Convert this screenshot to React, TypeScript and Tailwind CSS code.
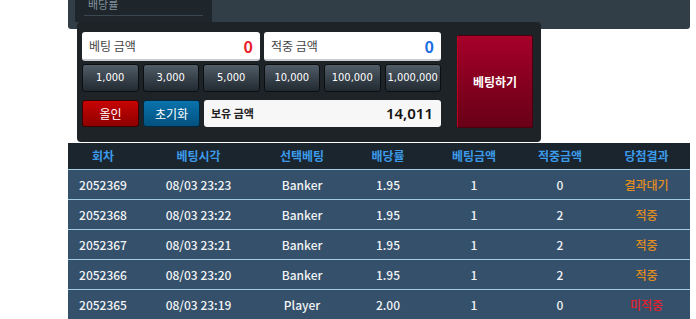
import React from "react";

const chips = ["1,000", "3,000", "5,000", "10,000", "100,000", "1,000,000"];

const rows = [
  { no: "2052369", time: "08/03 23:23", pick: "Banker", odds: "1.95", bet: "1", win: "0", result: "결과대기", color: "text-[#e38d1f]" },
  { no: "2052368", time: "08/03 23:22", pick: "Banker", odds: "1.95", bet: "1", win: "2", result: "적중", color: "text-[#e38d1f]" },
  { no: "2052367", time: "08/03 23:21", pick: "Banker", odds: "1.95", bet: "1", win: "2", result: "적중", color: "text-[#e38d1f]" },
  { no: "2052366", time: "08/03 23:20", pick: "Banker", odds: "1.95", bet: "1", win: "2", result: "적중", color: "text-[#e38d1f]" },
  { no: "2052365", time: "08/03 23:19", pick: "Player", odds: "2.00", bet: "1", win: "0", result: "미적중", color: "text-[#e5202e]" },
];

const headers = ["회차", "베팅시각", "선택베팅", "배당률", "베팅금액", "적중금액", "당첨결과"];

const grid = "grid grid-cols-[70px_121px_86px_86px_86px_86px_87px]";

export default function App() {
  return (
    <div className="w-[696px] h-[319px] bg-white overflow-hidden font-['Noto_Sans_CJK_KR','Noto_Sans',sans-serif]">
      {/* top bar */}
      <div className="ml-[68px] w-[622px] h-[29px] bg-[#313d47] rounded-b-[3px] pl-[7px]">
        <div className="w-[137px] h-[22px] bg-[#1f262b] px-[9px]">
          <div className="h-[16px] border-b border-[#3b4751] overflow-hidden">
            <div className="-mt-[3px] pl-[4px] text-[11px] leading-[14px] text-[#7f909c]">배당률</div>
          </div>
        </div>
      </div>

      {/* betting panel */}
      <div className="relative -mt-[7px] ml-[77px] w-[464px] h-[120px] bg-[#1d2327] rounded-[4px] pl-[5px] pr-[8px] pt-[10px] flex gap-[16px]">
        <div className="w-[359px] flex flex-col">
          <div className="flex gap-[4px]">
            <div className="w-[178px] h-[29px] bg-white rounded-[3px] border-b-2 border-[#c9ccd3] flex items-center justify-between px-[7px]">
              <span className="text-[12px] text-[#444]">베팅 금액</span>
              <span className="text-[16px] font-bold text-[#e8232b] leading-none">0</span>
            </div>
            <div className="w-[177px] h-[29px] bg-white rounded-[3px] border-b-2 border-[#c9ccd3] flex items-center justify-between px-[7px]">
              <span className="text-[12px] text-[#444]">적중 금액</span>
              <span className="text-[16px] font-bold text-[#1b6fe0] leading-none">0</span>
            </div>
          </div>
          <div className="mt-[3px] flex gap-[4px]">
            {chips.map((c) => (
              <button
                key={c}
                className="flex-1 h-[28px] rounded-[3px] border border-[#0c0f12] bg-gradient-to-b from-[#515d68] to-[#222a31] text-white text-[11px] font-['DejaVu_Sans_Condensed','Liberation_Sans',sans-serif] flex items-center justify-center"
              >
                {c}
              </button>
            ))}
          </div>
          <div className="mt-[8px] flex gap-[4px]">
            <button className="w-[57px] h-[27px] rounded-[3px] border border-[#3a0000] bg-gradient-to-b from-[#c80404] to-[#8e0000] text-white text-[12px]">
              올인
            </button>
            <button className="w-[57px] h-[27px] rounded-[3px] border border-[#03273d] bg-gradient-to-b from-[#0a73ad] to-[#03517f] text-white text-[12px]">
              초기화
            </button>
            <div className="flex-1 h-[27px] rounded-[3px] bg-[#f7f7f7] flex items-center justify-between pl-[7px] pr-[8px]">
              <span className="text-[11px] font-bold text-[#222]">보유 금액</span>
              <span className="text-[15px] font-semibold text-[#111] font-['Noto_Sans',sans-serif]">14,011</span>
            </div>
          </div>
        </div>
        <button className="mt-[3px] w-[76px] h-[93px] rounded-[2px] border border-[#4a0010] border-l-[#c0001c] bg-gradient-to-b from-[#a60029] to-[#690017] text-white text-[12px] font-bold">
          베팅하기
        </button>
      </div>

      {/* table */}
      <div className="ml-[68px] mt-[1px] w-[622px]">
        <div className={`${grid} h-[26px] bg-[#1b252d] items-center text-center text-[12px] font-bold text-[#3b9bea]`}>
          {headers.map((h) => (
            <div key={h}>{h}</div>
          ))}
        </div>
        {rows.map((r) => (
          <div
            key={r.no}
            className={`${grid} h-[30px] bg-[#35506a] border-t border-[#a3cbe2] items-center text-center text-[12px] font-medium text-[#f2f4f6]`}
          >
            <div>{r.no}</div>
            <div>{r.time}</div>
            <div>{r.pick}</div>
            <div>{r.odds}</div>
            <div>{r.bet}</div>
            <div>{r.win}</div>
            <div className={r.color}>{r.result}</div>
          </div>
        ))}
      </div>
    </div>
  );
}
